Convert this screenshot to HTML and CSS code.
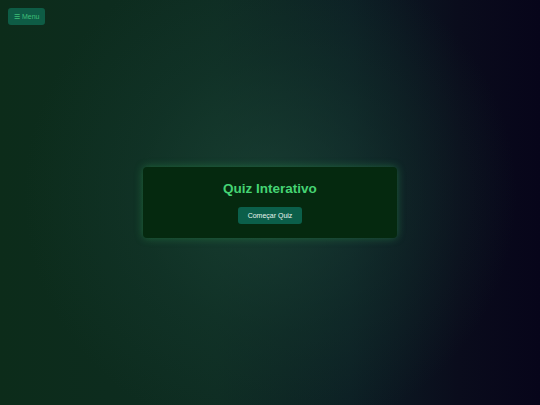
FILE: index.html
```html
<!DOCTYPE html>
<html lang="pt">
<head>
    <meta charset="UTF-8">
    <meta name="viewport" content="width=device-width, initial-scale=1.0">
    <title>Quiz Interativo</title>
    <link rel="stylesheet" href="styles.css">
</head>
<body>

    <button class="menu-btn">&#9776; Menu</button>

    <div class="stage">
        <div class="quiz-card">
            <h1 class="quiz-title">Quiz Interativo</h1>
            <button class="start-btn">Começar Quiz</button>
        </div>
    </div>

</body>
</html>
```

FILE: styles.css
```css
html, body {
    height: 100%;
}

body {
    font-family: "Liberation Sans", Arial, sans-serif;
    margin: 0;
    color: #fff;
    background:
        radial-gradient(circle at 50% 48%, rgba(30, 74, 58, 0.6) 0%, rgba(22, 60, 48, 0.35) 40%, rgba(0, 0, 0, 0) 72%),
        linear-gradient(to right, #0c2c1a 0%, #0e2c22 40%, #0c1e24 65%, #0a0c1c 85%, #07051a 100%);
    overflow: hidden;
}

.menu-btn {
    position: absolute;
    top: 8px;
    left: 8px;
    height: 17px;
    padding: 0 6px;
    font-family: "Liberation Sans", Arial, sans-serif;
    font-size: 7px;
    color: #3fbf78;
    background-color: #0e5c45;
    border: none;
    border-radius: 3px;
    cursor: pointer;
}

.stage {
    display: flex;
    align-items: center;
    justify-content: center;
    height: 100%;
}

.quiz-card {
    display: flex;
    flex-direction: column;
    align-items: center;
    width: 254px;
    box-sizing: border-box;
    padding: 14px 0;
    background-color: #05290f;
    border-radius: 4px;
    box-shadow: 0 0 8px rgba(60, 200, 100, 0.35);
}

.quiz-title {
    margin: 0 0 10px;
    font-size: 13.5px;
    line-height: 16px;
    font-weight: bold;
    color: #45d474;
}

.start-btn {
    height: 17px;
    padding: 0 10px;
    font-family: "Liberation Sans", Arial, sans-serif;
    font-size: 7px;
    color: #e8f5ee;
    background-color: #0b5f4a;
    border: none;
    border-radius: 3px;
    cursor: pointer;
}
```
